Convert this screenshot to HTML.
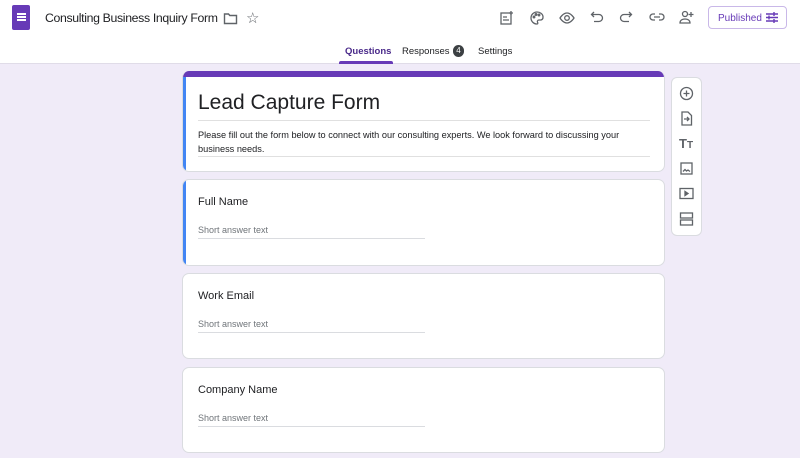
<!DOCTYPE html><html><head><style>
*{box-sizing:border-box;margin:0;padding:0}
body{width:800px;height:458px;overflow:hidden;background:#f0ebf8;font-family:"Liberation Sans",Arial,sans-serif;color:#202124;position:relative}
.hdr{position:absolute;left:0;top:0;width:800px;height:64px;background:#fff;border-bottom:1px solid #e0dce8}
.abs{position:absolute}
.card{position:absolute;left:182px;width:483px;background:#fff;border-radius:7px;border:1px solid #dadce0;overflow:hidden}
svg{display:block}
.q{font-size:11px;position:absolute;left:15px;top:16px}
.sa{font-size:9px;color:#70757a;position:absolute;left:15px;top:45px}
.ul{position:absolute;left:15px;top:58px;width:227px;border-top:1px solid #dadce0}
</style></head><body>
<div class="hdr">
 <div class="abs" style="left:12px;top:5px;width:18px;height:25px;background:#673ab7;border-radius:2px"></div>
 <div class="abs" style="left:17px;top:13px;width:9px;height:1.5px;background:#fff;box-shadow:0 3px 0 #fff,0 6px 0 #fff"></div>
 <div class="abs" style="left:45px;top:11px;font-size:12.3px;letter-spacing:-0.35px;white-space:nowrap">Consulting Business Inquiry Form</div>
 <svg class="abs" style="left:223px;top:12px" width="15" height="13" viewBox="0 0 15 13"><path d="M1.5 2h4l1.3 1.5h6.7v8h-12z" fill="none" stroke="#5f6368" stroke-width="1.4"/></svg>
 <div class="abs" style="left:246px;top:9px;font-size:15px;color:#5f6368">☆</div>
 <svg class="abs" style="left:499px;top:10px" width="16" height="16" viewBox="0 0 16 16" fill="none" stroke="#5f6368" stroke-width="1.3"><rect x="2" y="3" width="10" height="11"/><path d="M4 7h4M4 10h6M12 1v4M10 3h4"/></svg>
 <svg class="abs" style="left:529px;top:10px" width="16" height="16" viewBox="0 0 16 16" fill="none" stroke="#5f6368" stroke-width="1.3"><path d="M8 2a6 6 0 1 0 0 12c1 0 1-1 .5-1.7S8.5 10 10 10h2a3 3 0 0 0 2-3C14 4 11 2 8 2z"/><circle cx="5" cy="7" r=".8"/><circle cx="7" cy="4.5" r=".8"/><circle cx="10" cy="5" r=".8"/></svg>
 <svg class="abs" style="left:559px;top:10px" width="16" height="16" viewBox="0 0 16 16" fill="none" stroke="#5f6368" stroke-width="1.3"><path d="M1 8s3-5 7-5 7 5 7 5-3 5-7 5-7-5-7-5z"/><circle cx="8" cy="8" r="2.3"/></svg>
 <svg class="abs" style="left:590px;top:10px" width="14" height="14" viewBox="0 0 14 14" fill="none" stroke="#5f6368" stroke-width="1.3"><path d="M4 2L1.5 4.5 4 7M1.5 4.5H9a3.5 3.5 0 0 1 0 7H4"/></svg>
 <svg class="abs" style="left:619px;top:10px" width="14" height="14" viewBox="0 0 14 14" fill="none" stroke="#5f6368" stroke-width="1.3"><path d="M10 2l2.5 2.5L10 7M12.5 4.5H5a3.5 3.5 0 0 0 0 7h5"/></svg>
 <svg class="abs" style="left:649px;top:11px" width="16" height="12" viewBox="0 0 16 12" fill="none" stroke="#5f6368" stroke-width="1.3"><path d="M6 3H4a3 3 0 0 0 0 6h2M10 3h2a3 3 0 0 1 0 6h-2M5 6h6"/></svg>
 <svg class="abs" style="left:678px;top:9px" width="17" height="16" viewBox="0 0 17 16" fill="none" stroke="#5f6368" stroke-width="1.3"><circle cx="7" cy="5" r="2.5"/><path d="M2 14c0-3 2.5-4 5-4s5 1 5 4zM13 3v5M10.5 5.5h5"/></svg>
 <div class="abs" style="left:708px;top:6px;width:79px;height:23px;border:1px solid #c9b8e8;border-radius:4px;color:#673ab7;font-size:10px;padding:6px 0 0 9px">Published</div>
 <svg class="abs" style="left:765px;top:11px" width="14" height="13" viewBox="0 0 14 13" stroke="#673ab7" stroke-width="1.4"><path d="M1 3h12M1 6.5h12M1 10h12M9 1v4M4 4.5v4M9 8v4"/></svg>
 <div class="abs" style="left:345px;top:46px;font-size:9.5px;font-weight:bold;color:#4a2a8a">Questions</div>
 <div class="abs" style="left:339px;top:61px;width:54px;height:3px;background:#673ab7;border-radius:2px 2px 0 0"></div>
 <div class="abs" style="left:402px;top:46px;font-size:9.5px;color:#202124">Responses</div>
 <div class="abs" style="left:453px;top:45px;width:11px;height:12px;border-radius:6px;background:#3c4043;color:#fff;font-size:8px;text-align:center;line-height:12px">4</div>
 <div class="abs" style="left:478px;top:46px;font-size:9.5px">Settings</div>
</div>

<div class="card" style="top:71px;height:101px;border-top:none">
 <div class="abs" style="left:0;top:0;width:483px;height:6px;background:#673ab7"></div>
 <div class="abs" style="left:-1px;top:6px;width:4px;height:95px;background:#4285f4"></div>
 <div class="abs" style="left:15px;top:20px;font-size:21px">Lead Capture Form</div>
 <div class="abs" style="left:15px;top:49px;width:452px;border-top:1px solid #e0e0e0"></div>
 <div class="abs" style="left:15px;top:57px;font-size:9.2px;line-height:14px;width:450px">Please fill out the form below to connect with our consulting experts. We look forward to discussing your business needs.</div>
 <div class="abs" style="left:15px;top:85px;width:452px;border-top:1px solid #e0e0e0"></div>
</div>

<div class="card" style="top:179px;height:87px"><div class="abs" style="left:-1px;top:0;width:4px;height:87px;background:#4285f4"></div><div class="q">Full Name</div><div class="sa">Short answer text</div><div class="ul"></div></div>
<div class="card" style="top:273px;height:86px"><div class="q">Work Email</div><div class="sa">Short answer text</div><div class="ul"></div></div>
<div class="card" style="top:367px;height:86px"><div class="q">Company Name</div><div class="sa">Short answer text</div><div class="ul"></div></div>

<div class="abs" style="left:671px;top:77px;width:31px;height:159px;background:#fff;border-radius:6px;border:1px solid #dadce0">
 <svg class="abs" style="left:7px;top:8px" width="15" height="15" viewBox="0 0 15 15" fill="none" stroke="#5f6368" stroke-width="1.3"><circle cx="7.5" cy="7.5" r="6"/><path d="M7.5 4.5v6M4.5 7.5h6"/></svg>
 <svg class="abs" style="left:8px;top:33px" width="13" height="15" viewBox="0 0 13 15" fill="none" stroke="#5f6368" stroke-width="1.3"><path d="M2 1h6l3.5 3.5V14H2zM4 8h5M7 6l2 2-2 2"/></svg>
 <div class="abs" style="left:7px;top:58px;font-size:13px;color:#5f6368;font-weight:bold">T<span style="font-size:10px">T</span></div>
 <svg class="abs" style="left:8px;top:84px" width="13" height="13" viewBox="0 0 13 13" fill="none" stroke="#5f6368" stroke-width="1.3"><rect x="1" y="1" width="11" height="11"/><path d="M3 9.5l2-2 1.5 1.5 1.5-1 2 1.5"/></svg>
 <svg class="abs" style="left:7px;top:109px" width="15" height="13" viewBox="0 0 15 13" fill="none" stroke="#5f6368" stroke-width="1.3"><rect x="1" y="1.5" width="13" height="10"/><path d="M6 4.5v4l3-2z" fill="#5f6368"/></svg>
 <svg class="abs" style="left:7px;top:134px" width="15" height="14" viewBox="0 0 15 14" fill="none" stroke="#5f6368" stroke-width="1.3"><rect x="1.5" y="1" width="12" height="5"/><rect x="1.5" y="8" width="12" height="5"/></svg>
</div>
</body></html>
